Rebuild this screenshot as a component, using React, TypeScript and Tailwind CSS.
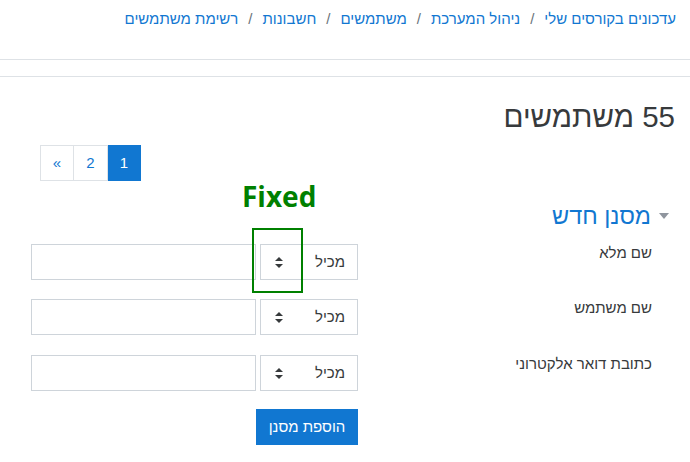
import React from "react";

const crumbs = ["עדכונים בקורסים שלי", "ניהול המערכת", "משתמשים", "חשבונות", "רשימת משתמשים"];

const fields = ["שם מלא", "שם משתמש", "כתובת דואר אלקטרוני"];

function SelectArrows() {
	return (
		<svg width="8" height="11" viewBox="0 0 8 11" className="fill-[#373a3c]">
			<path d="M4 0 L8 4 L0 4 Z" />
			<path d="M0 7 L8 7 L4 11 Z" />
		</svg>
	);
}

function FilterRow({ label, index }: { label: string; index: number }) {
	const top = index === 0 ? "mt-[15px]" : index === 1 ? "mt-[19px]" : "mt-[20px]";
	return (
		<div className={`flex justify-between h-[36px] ${top}`}>
			<div className="leading-[18px]">{label}</div>
			<div className="flex gap-[4px]">
				<div className="w-[98px] h-[36px] border border-[#ced4da] flex items-center justify-between pr-[12px] pl-[14px]">
					<span>מכיל</span>
					<SelectArrows />
				</div>
				<div className="w-[225px] h-[36px] border border-[#ced4da] bg-white" />
			</div>
		</div>
	);
}

export default function App() {
	return (
		<div
			dir="rtl"
			className="relative w-[690px] h-[462px] overflow-hidden bg-white font-['Liberation_Sans',Arial,sans-serif] text-[15px] text-[#373a3c]"
		>
			<nav className="h-[60px] border-b border-[#dee2e6] pr-[14px] pt-[8px] leading-[22px]">
				<ol className="flex text-[#1177d1]">
					{crumbs.map((c, i) => (
						<li key={c} className="flex">
							{i > 0 && <span className="px-[10px] text-[#6a737b]">/</span>}
							<span>{c}</span>
						</li>
					))}
				</ol>
			</nav>
			<div className="h-[17px] border-b border-[#dee2e6]" />

			<div className="pr-[15px] pl-[40px]">
				<h2 className="mt-[22px] text-[29.5px] leading-[35px] text-[#373a3c]">55 משתמשים</h2>
				<div className="flex justify-end mt-[11px]">
					<ul className="flex">
						<li className="w-[34px] h-[36px] flex items-center justify-center bg-[#1177d1] border border-[#1177d1] text-white">
							1
						</li>
						<li className="w-[35px] h-[36px] -mr-px flex items-center justify-center border border-[#dee2e6] text-[#1177d1]">
							2
						</li>
						<li className="w-[34px] h-[36px] -mr-px flex items-center justify-center border border-[#dee2e6] text-[#1177d1]">
							<span dir="ltr">«</span>
						</li>
					</ul>
				</div>
			</div>

			<div className="pr-[21px] pl-[31px]">
				<div className="mt-[22px] flex items-center gap-[8px] h-[26px]">
					<svg width="10" height="6" viewBox="0 0 10 6" className="fill-[#8f959e]">
						<path d="M0 0 L10 0 L5 6 Z" />
					</svg>
					<div className="text-[23.5px] leading-[26px] text-[#1177d1]">מסנן חדש</div>
				</div>
				<div className="pr-[17px]">
					{fields.map((f, i) => (
						<FilterRow key={f} label={f} index={i} />
					))}
					<div className="flex justify-end mt-[18px]">
						<div className="w-[327px] flex">
							<button className="h-[36px] w-[102px] bg-[#1177d1] text-white">הוספת מסנן</button>
						</div>
					</div>
				</div>
			</div>

			<div className="absolute left-[242px] top-[178px] font-['Open_Sans',sans-serif] font-bold text-[28px] leading-[36px] text-[#008000]">
				Fixed
			</div>
			<div className="absolute left-[252px] top-[228px] w-[51px] h-[65px] border-2 border-[#008000]" />
		</div>
	);
}
